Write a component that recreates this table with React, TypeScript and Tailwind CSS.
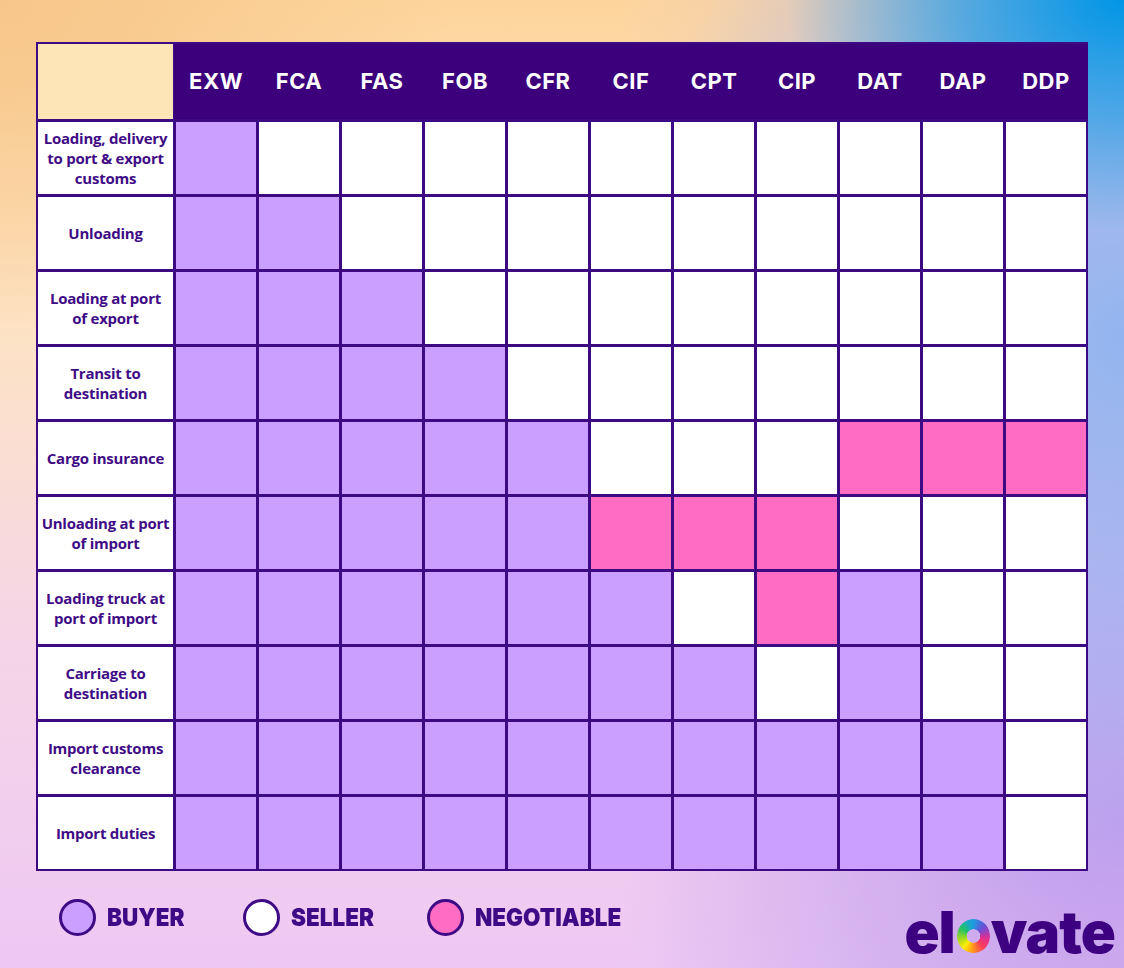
import React from "react";

const COLS = ["EXW", "FCA", "FAS", "FOB", "CFR", "CIF", "CPT", "CIP", "DAT", "DAP", "DDP"];

const ROWS: { lines: string[]; cells: string }[] = [
  { lines: ["Loading, delivery", "to port & export", "customs"], cells: "BSSSSSSSSSS" },
  { lines: ["Unloading"], cells: "BBSSSSSSSSS" },
  { lines: ["Loading at port", "of export"], cells: "BBBSSSSSSSS" },
  { lines: ["Transit to", "destination"], cells: "BBBBSSSSSSS" },
  { lines: ["Cargo insurance"], cells: "BBBBBSSSNNN" },
  { lines: ["Unloading at port", "of import"], cells: "BBBBBNNNSSS" },
  { lines: ["Loading truck at", "port of import"], cells: "BBBBBBSNBSS" },
  { lines: ["Carriage to", "destination"], cells: "BBBBBBBSBSS" },
  { lines: ["Import customs", "clearance"], cells: "BBBBBBBBBBS" },
  { lines: ["Import duties"], cells: "BBBBBBBBBBS" },
];

function cellClass(c: string) {
  if (c === "B") return "bg-[#cb9fff]";
  if (c === "N") return "bg-[#ff6cc3]";
  return "bg-white";
}

function LegendItem({ color, label }: { color: string; label: string }) {
  return (
    <div className="flex items-center w-[184px]">
      <div className={`w-[37px] h-[37px] rounded-full border-[3px] border-[#3f0a85] shrink-0 ${color}`} />
      <span className="ml-[11px] inline-block origin-left scale-x-[0.9] whitespace-nowrap font-['Inter',sans-serif] font-black text-[25px] leading-none text-[#3f0a85]">
        {label}
      </span>
    </div>
  );
}

export default function App() {
  return (
    <div className="w-[1124px] h-[968px] overflow-hidden pt-[42px] pl-[36px] pr-[7px] bg-[radial-gradient(ellipse_30%_24%_at_100%_0%,#0096e6_0%,rgba(0,150,230,0.55)_50%,transparent_100%),radial-gradient(ellipse_45%_60%_at_100%_35%,#92b4f0_0%,rgba(150,180,240,0.55)_50%,transparent_100%),radial-gradient(ellipse_45%_45%_at_100%_85%,#c59cee_0%,rgba(197,156,238,0.5)_50%,transparent_100%),linear-gradient(90deg,transparent_55%,rgba(205,190,235,0.7)_100%),radial-gradient(ellipse_40%_35%_at_0%_0%,#f7c68a_0%,transparent_100%),linear-gradient(180deg,#fdd59c_0%,#fde3c6_35%,#f6d5e6_65%,#eec8f4_100%)]">
      <div className="grid w-[1052px] grid-cols-[135px_repeat(11,80px)] grid-rows-[75px_repeat(10,72px)] gap-[3px] p-[2px] bg-[#3e0a84]">
        <div className="bg-[#fde5b7]" />
        {COLS.map((c) => (
          <div
            key={c}
            className="bg-[#3d007c] -mx-[2px] px-[2px] flex items-center justify-center font-['Inter',sans-serif] font-bold text-[22px] tracking-[0.5px] text-white"
          >
            {c}
          </div>
        ))}
        {ROWS.map((r) => (
          <React.Fragment key={r.lines.join(" ")}>
            <div className="bg-white flex flex-col items-center justify-center text-center whitespace-nowrap font-['Open_Sans',sans-serif] font-bold text-[15px] leading-[20px] tracking-[-0.25px] text-[#3f0c86]">
              {r.lines.map((l) => (
                <span key={l}>{l}</span>
              ))}
            </div>
            {r.cells.split("").map((c, i) => (
              <div key={i} className={cellClass(c)} />
            ))}
          </React.Fragment>
        ))}
      </div>
      <div className="flex items-start w-full">
        <div className="flex items-center mt-[28px] ml-[23px]">
          <LegendItem color="bg-[#cb9fff]" label="BUYER" />
          <LegendItem color="bg-white" label="SELLER" />
          <LegendItem color="bg-[#ff6cc3]" label="NEGOTIABLE" />
        </div>
        <div className="ml-auto mt-[29px] flex items-baseline font-['Inter',sans-serif] font-black text-[58px] leading-[64px] tracking-[-1px] text-[#3d0080]">
          <span className="pr-[2px]">el</span>
          <span className="inline-block w-[33px] h-[34px] rounded-full bg-[conic-gradient(from_0deg,#1e9be0_0deg,#6d4bd8_50deg,#e0308f_100deg,#ff3d5a_140deg,#ff9a1a_185deg,#ffee00_220deg,#8fd42a_265deg,#1fc16a_305deg,#1aa8c8_340deg,#1e9be0_360deg)] [mask-image:radial-gradient(circle,transparent_6.5px,black_7px)]" />
          <span className="pl-[1px] pr-[2px]">vate</span>
        </div>
      </div>
    </div>
  );
}
